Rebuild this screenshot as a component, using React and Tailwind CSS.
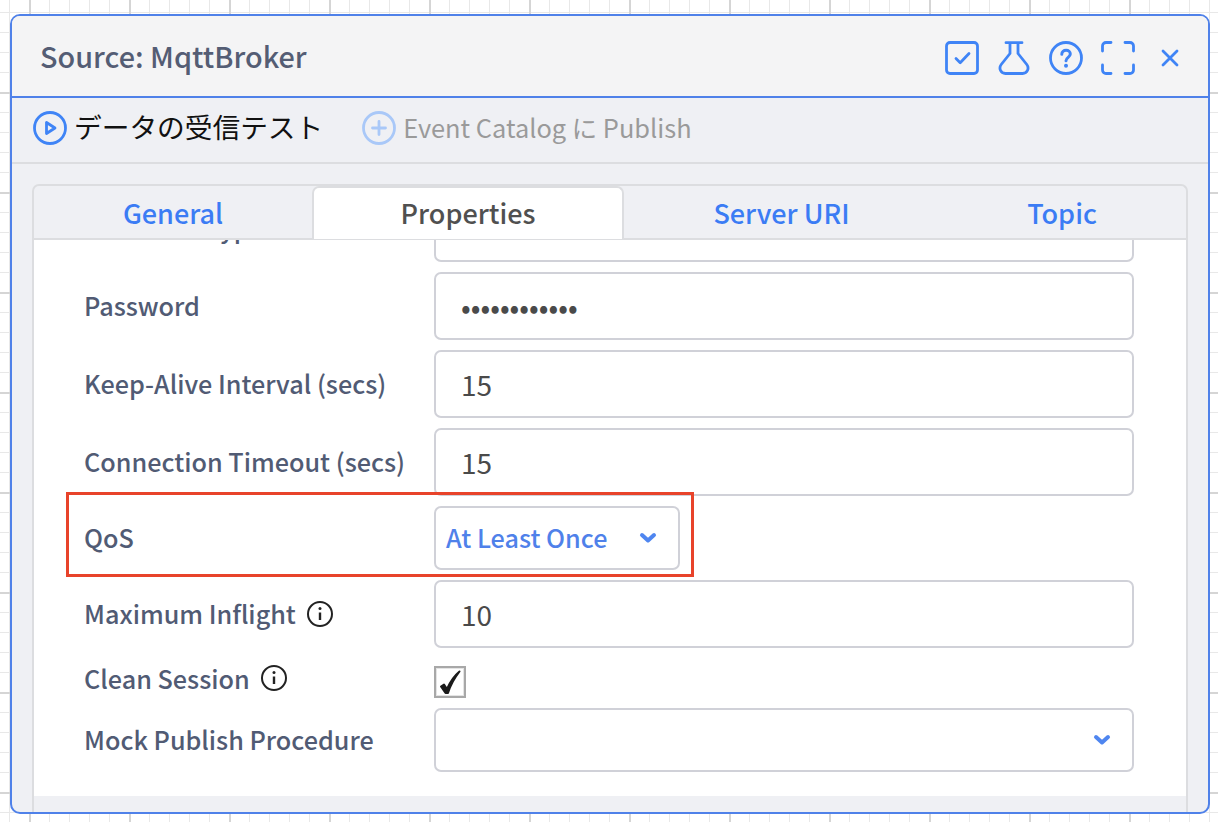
const font = "font-['Noto_Sans_CJK_JP',sans-serif]";

function Chevron({ className }) {
  return (
    <svg viewBox="0 0 18 12" className={className} fill="none" stroke="currentColor" strokeWidth="4" strokeLinecap="round" strokeLinejoin="round">
      <path d="M3 3l6 5.500L15 3" />
    </svg>
  );
}

function Info() {
  return (
    <svg viewBox="0 0 28 28" className="w-[28px] h-[28px] text-[#222]" fill="none" stroke="currentColor" strokeWidth="2">
      <circle cx="14" cy="14" r="12" />
      <path d="M14 12.500v7.500" strokeWidth="2.400" />
      <circle cx="14" cy="8.600" r="1.500" fill="currentColor" stroke="none" />
    </svg>
  );
}

function Label({ children, info }) {
  return (
    <div className="w-[350px] shrink-0 flex items-center gap-[10px] text-[25.2px] font-medium text-[#515b74]">
      <span>{children}</span>
      {info && <Info />}
    </div>
  );
}

function InputRow({ label, value, info, dots, mb = "mb-[10px]" }) {
  return (
    <div className={`flex items-center ${mb}`}>
      <Label info={info}>{label}</Label>
      <div className="w-[700px] h-[68px] border-2 border-[#d0d1d8] rounded-[7px] px-[25px] flex items-center text-[28px] text-[#4a4a4a] bg-white">
        {dots ? <span className="text-[28.600px]">{value}</span> : value}
      </div>
    </div>
  );
}

function SelectBox({ value, w }) {
  return (
    <div className={`${w} h-[64px] border-2 border-[#d0d1d8] rounded-[7px] pl-[10px] pr-[21px] flex items-center justify-between bg-white text-[25.200px] font-medium text-[#4f81ea]`}>
      <span>{value}</span>
      <Chevron className="w-[18px] h-[12px] text-[#4f86f0]" />
    </div>
  );
}

function Tab({ children, active, w }) {
  return active ? (
    <div className={`${w} h-[53px] bg-white border-x-2 border-t-2 border-[#dcdde0] rounded-t-[7px] flex items-center justify-center text-[27px] font-medium text-[#505050] relative`}>
      {children}
    </div>
  ) : (
    <div className={`${w} h-[52px] pt-[2px] flex items-center justify-center text-[27px] font-medium text-[#3b7cf4]`}>
      {children}
    </div>
  );
}

export default function App() {
  return (
    <div className={`${font} relative w-full h-[822px] overflow-hidden pt-[14px] pl-[10px] bg-white bg-[linear-gradient(#d5d5d5_2px,transparent_2px),linear-gradient(90deg,#d5d5d5_2px,transparent_2px),linear-gradient(#e8e8e8_1px,transparent_1px),linear-gradient(90deg,#e8e8e8_1px,transparent_1px)] bg-[size:100px_100px,100px_100px,20px_20px,20px_20px] bg-[position:29px_92px,29px_92px,29px_12px,29px_12px]`}>
      <div className="w-[1200px] h-[800px] border-2 border-[#4f81e9] rounded-[10px] bg-[#eff0f4] flex flex-col overflow-hidden relative">
        <header className="h-[82px] shrink-0 bg-[#f4f4f5] border-b-2 border-[#4f81e9] flex items-center justify-between pl-[28px] pr-[29px]">
          <div className="text-[28.800px] font-medium text-[#545d74]">Source: MqttBroker</div>
          <div className="flex items-center text-[#3f84f6] pt-[3px]">
            <svg viewBox="0 0 34 34" className="w-[34px] h-[34px]" fill="none" stroke="currentColor" strokeWidth="2.800" strokeLinecap="round" strokeLinejoin="round">
              <rect x="1.500" y="1.500" width="31" height="31" rx="3.500" />
              <path d="M11 17.500l4.200 4.200L24 12.500" />
            </svg>
            <svg viewBox="0 0 32 34" className="w-[32px] h-[34px] ml-[19px]" fill="none" stroke="currentColor" strokeWidth="2.800" strokeLinecap="round" strokeLinejoin="round">
              <path d="M8 1.700h16M12 2v10.500L3.200 23.500c-2.600 3.400-.8 9 4.200 9h17.200c5 0 6.800-5.600 4.200-9L20 12.500V2" />
            </svg>
            <svg viewBox="0 0 34 34" className="w-[34px] h-[34px] ml-[19px]" fill="none" stroke="currentColor" strokeWidth="2.800" strokeLinecap="round" strokeLinejoin="round">
              <circle cx="17" cy="17" r="15.500" />
              <path d="M12.800 13.200c0-2.400 1.900-4 4.300-4s4.200 1.600 4.200 3.800c0 3.400-4.300 3.300-4.300 6.800" strokeWidth="3" />
              <circle cx="17" cy="24.800" r="2" fill="currentColor" stroke="none" />
            </svg>
            <svg viewBox="0 0 34 34" className="w-[34px] h-[34px] ml-[18px]" fill="none" stroke="currentColor" strokeWidth="2.800" strokeLinecap="round" strokeLinejoin="round">
              <path d="M10 1.500H5A3.500 3.500 0 0 0 1.500 5v5M24 1.500h5A3.500 3.500 0 0 1 32.500 5v5M10 32.500H5A3.500 3.500 0 0 1 1.500 29v-5M24 32.500h5a3.500 3.500 0 0 0 3.500-3.500v-5" />
            </svg>
            <svg viewBox="0 0 18 18" className="w-[18px] h-[18px] ml-[26px]" fill="none" stroke="currentColor" strokeWidth="2.800" strokeLinecap="round">
              <path d="M2 2l14 14M16 2L2 16" />
            </svg>
          </div>
        </header>

        <div className="h-[66px] shrink-0 border-b-2 border-[#dcdde0] flex items-center pl-[21px] pb-[4px]">
          <svg viewBox="0 0 34 34" className="w-[34px] h-[34px] text-[#3f84f6]" fill="none" stroke="currentColor" strokeWidth="2.800" strokeLinejoin="round">
            <circle cx="17" cy="17" r="15.500" />
            <path d="M13.500 11.500v11l8.500-5.500z" />
          </svg>
          <span className="ml-[7px] text-[27.700px] text-[#111] -mt-[2px]">データの受信テスト</span>
          <svg viewBox="0 0 34 34" className="w-[34px] h-[34px] ml-[39px] text-[#a9c8f8]" fill="none" stroke="currentColor" strokeWidth="2.800" strokeLinecap="round">
            <circle cx="17" cy="17" r="15.500" />
            <path d="M17 10.500v13M10.500 17h13" />
          </svg>
          <span className="ml-[7px] text-[25.400px] text-[#9a9a9a] -mt-[2px]">Event Catalog に Publish</span>
        </div>

        <div className="flex-1 min-h-0 pt-[20px] pl-[20px]">
          <div className="w-[1156px] h-[629px] border-x-2 border-t-2 border-[#dcdde0] rounded-t-[7px] flex flex-col">
            <div className="flex shrink-0 h-[54px] border-b-2 border-[#dcdde0]">
              <Tab w="w-[278px]">General</Tab>
              <Tab active w="w-[312px]">Properties</Tab>
              <Tab w="w-[315px]">Server URI</Tab>
              <Tab w="w-[246px]">Topic</Tab>
            </div>
            <div className="h-[556px] shrink-0 bg-white overflow-hidden pl-[50px]">
              <div className="-mt-[46px]">
                <div className="flex items-center mb-[10px]">
                  <Label>Password Type</Label>
                  <div className="w-[700px] h-[68px] border-2 border-[#d0d1d8] rounded-[7px] px-[10px] flex items-center text-[25px] font-medium text-[#4f81ea]">Username</div>
                </div>
                <InputRow label="Password" value="••••••••••••" dots />
                <InputRow label="Keep-Alive Interval (secs)" value="15" />
                <InputRow label="Connection Timeout (secs)" value="15" />
                <div className="flex items-center mb-[10px]">
                  <Label>QoS</Label>
                  <SelectBox value="At Least Once" w="w-[246px]" />
                </div>
                <InputRow label="Maximum Inflight" value="10" info mb="mb-[11px]" />
                <div className="flex items-center h-[39px]">
                  <Label info>Clean Session</Label>
                  <div className="w-[32px] h-[32px] mt-[6px] border-2 border-[#a8a8a8] shadow-[inset_0_0_0_1px_#e4e4e4] bg-white flex items-center justify-center">
                    <svg viewBox="0 0 24 26" className="w-[24px] h-[26px] text-[#1a1a1a]" fill="currentColor" stroke="currentColor" strokeWidth="2" strokeLinejoin="round">
                      <path d="M3 17.500l3-2 3 4.500C12 13 16 7 21.500 2.500C16.500 9 12.500 16 10 24H7.500z" />
                    </svg>
                  </div>
                </div>
                <div className="flex items-center mt-[10px]">
                  <Label>Mock Publish Procedure</Label>
                  <SelectBox value="" w="w-[700px]" />
                </div>
              </div>
            </div>
          </div>
        </div>
      </div>
      <div className="absolute left-[66px] top-[492px] w-[628px] h-[85px] border-[3px] border-[#e8432a]" />
    </div>
  );
}
